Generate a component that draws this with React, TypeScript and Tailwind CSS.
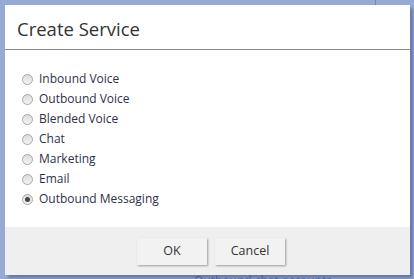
import { useState } from "react";

const services = [
  "Inbound Voice",
  "Outbound Voice",
  "Blended Voice",
  "Chat",
  "Marketing",
  "Email",
  "Outbound Messaging",
];

const Radio = ({ checked }: { checked: boolean }) => (
  <span className="flex h-[11px] w-[11px] shrink-0 items-center justify-center rounded-full border border-[#a9a9a9] bg-gradient-to-b from-[#dcdcdc] to-[#f4f4f4]">
    {checked && <span className="h-[5px] w-[5px] rounded-full bg-[#444]" />}
  </span>
);

export default function App() {
  const [selected, setSelected] = useState("Outbound Messaging");

  return (
    <div
      className="relative h-[279px] w-[414px] overflow-hidden bg-[#96aad5] pl-[5px] pt-[5px]"
      style={{ fontFamily: '"Open Sans", "Noto Sans", sans-serif' }}
    >
      <span className="absolute left-[375px] top-[0px] h-[6px] w-[1px] bg-[#6f86c0]" />
      <span className="absolute left-[194px] top-[275px] text-[12px] leading-none text-[#5a6ea8]">
        Outbound chat accounts
      </span>
      <div className="relative flex h-[270px] w-[405px] flex-col bg-white shadow-[3px_3px_3px_rgba(40,60,110,0.45)]">
        <div className="h-[45px] border-b border-[#8a8a8a] pl-[12px] pt-[11px] text-[18.5px] leading-[26px] text-[#333]">
          Create Service
        </div>
        <div className="flex flex-1 flex-col pl-[17px] pt-[19px]">
          {services.map((s) => (
            <label
              key={s}
              onClick={() => setSelected(s)}
              className="flex h-[20px] cursor-pointer items-center gap-[6px] text-[12px] text-[#30304a]"
            >
              <Radio checked={selected === s} />
              <span>{s}</span>
            </label>
          ))}
        </div>
        <div className="flex h-[48px] items-center justify-center gap-[8px] bg-[#efefef] pl-[7px]">
          <button className="h-[27px] w-[70px] bg-[#f2f2f2] text-[12.5px] text-[#333] shadow-[1px_1px_2px_rgba(0,0,0,0.35)]">
            OK
          </button>
          <button className="h-[27px] w-[70px] bg-[#f2f2f2] text-[12.5px] text-[#333] shadow-[1px_1px_2px_rgba(0,0,0,0.35)]">
            Cancel
          </button>
        </div>
      </div>
    </div>
  );
}
